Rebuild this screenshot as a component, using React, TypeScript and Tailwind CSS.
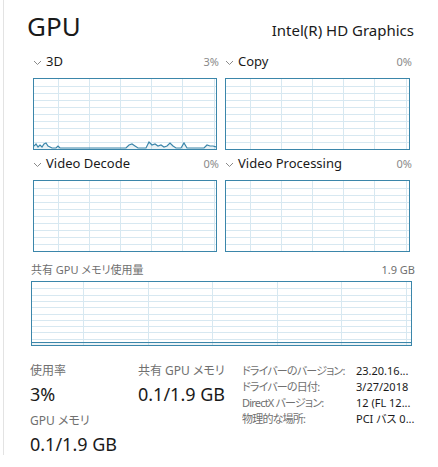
import React from "react";

const LINE = "#3b86aa";
const GRID = "#d7e8f1";

type GraphProps = {
  w: number;
  h: number;
  firstCol: number;
  colStep: number;
  cols: number;
  rows: number;
  points?: [number, number][];
  fillLevel?: number;
};

const Graph: React.FC<GraphProps> = ({ w, h, firstCol, colStep, cols, rows, points, fillLevel }) => {
  const iw = w - 2;
  const ih = h - 2;
  const vlines = Array.from({ length: cols }, (_, i) => Math.round(firstCol + i * colStep) + 0.5);
  const hlines = Array.from({ length: rows - 1 }, (_, i) => Math.round(((i + 1) * ih) / rows) + 0.5);
  const path = points ? points.map(([x, v]) => `${x},${ih - 1 - v}`).join(" ") : "";

  return (
    <div className="border border-[#3b86aa] bg-white" style={{ width: w, height: h }}>
      <svg width={iw} height={ih} className="block">
        {hlines.map((y) => (
          <line key={"h" + y} x1={0} x2={iw} y1={y} y2={y} stroke={GRID} strokeWidth={1} />
        ))}
        {vlines.map((x) => (
          <line key={"v" + x} x1={x} x2={x} y1={0} y2={ih} stroke={GRID} strokeWidth={1} />
        ))}
        {points && (
          <>
            <polygon points={`0,${ih} ${path} ${iw},${ih}`} fill="rgba(59,134,170,0.10)" />
            <polyline points={path} fill="none" stroke={LINE} strokeWidth={1.2} />
          </>
        )}
        {fillLevel !== undefined && (
          <>
            <rect x={0} y={ih - fillLevel} width={iw} height={fillLevel} fill="rgba(59,134,170,0.10)" />
            <line x1={0} x2={iw} y1={ih - fillLevel + 0.5} y2={ih - fillLevel + 0.5} stroke={LINE} strokeWidth={1} />
          </>
        )}
      </svg>
    </div>
  );
};

const Chevron = () => (
  <svg width="9" height="6" viewBox="0 0 9 6" className="mr-[4px] mt-[1px]">
    <polyline points="1,1 4.5,4.5 8,1" fill="none" stroke="#8a8a8a" strokeWidth="1" />
  </svg>
);

const data3d: [number, number][] = [
  [0, 2], [2, 4], [4, 1], [6, 3], [8, 1], [10, 4], [12, 5], [14, 2], [16, 1], [18, 0], [22, 0], [24, 2], [26, 0],
  [92, 0], [95, 3], [98, 4], [101, 2], [104, 0], [112, 0], [115, 6], [118, 3], [121, 4], [124, 2], [127, 3],
  [130, 1], [133, 2], [136, 5], [139, 2], [142, 0], [147, 0], [150, 5], [153, 0], [170, 0], [173, 3], [176, 2],
  [179, 2], [182, 1],
];

const Engine: React.FC<{ name: string; pct: string; w: number; points?: [number, number][] }> = ({ name, pct, w, points }) => (
  <div>
    <div className="flex items-center h-[20px] pb-[2px] mb-[5px]">
      <Chevron />
      <span className="text-[13px] text-[#1a1a1a]">{name}</span>
      <span className="ml-auto text-[11px] text-[#8a8a8a]">{pct}</span>
    </div>
    <Graph w={w} h={72} firstCol={24} colStep={31.1} cols={6} rows={10} points={points} />
  </div>
);

const Stat: React.FC<{ label: string; value: string }> = ({ label, value }) => (
  <div>
    <div className="text-[12px] leading-[16px] text-[#707070] [font-feature-settings:'palt']">{label}</div>
    <div className="mt-[3px] text-[18px] leading-[24px] text-[#1a1a1a]">{value}</div>
  </div>
);

const details: [string, string][] = [
  ["ドライバーのバージョン:", "23.20.16..."],
  ["ドライバーの日付:", "3/27/2018"],
  ["DirectX バージョン:", "12 (FL 12..."],
  ["物理的な場所:", "PCI バス 0..."],
];

export default function App() {
  return (
    <div className="w-[438px] h-[467px] bg-white font-['Noto_Sans','Noto_Sans_CJK_JP',sans-serif]">
      <div className="ml-[3px] h-[455px] border-l border-[#e3e3e3] pt-[13px]">
        {/* header */}
        <div className="flex items-baseline pl-[23px] pr-[24px]">
          <span className="text-[26px] leading-[26px] text-[#1a1a1a]">GPU</span>
          <span className="ml-auto text-[15px] leading-[26px] text-[#1a1a1a]">Intel(R) HD Graphics</span>
        </div>

        {/* engines */}
        <div className="grid grid-cols-[186px_187px] gap-x-[6px] gap-y-[5px] pl-[29px] mt-[10px]">
          <Engine name="3D" pct="3%" w={184} points={data3d} />
          <Engine name="Copy" pct="0%" w={185} />
          <Engine name="Video Decode" pct="0%" w={184} />
          <Engine name="Video Processing" pct="0%" w={185} />
        </div>

        {/* shared memory */}
        <div className="pl-[27px] pr-[23px] mt-[11px]">
          <div className="flex items-center h-[18px] pb-[3px] text-[11px] text-[#707070] [font-feature-settings:'palt']">
            <span>共有 GPU メモリ使用量</span>
            <span className="ml-auto">1.9 GB</span>
          </div>
          <Graph w={381} h={65} firstCol={51} colStep={64.6} cols={6} rows={10} fillLevel={3} />
        </div>

        {/* stats */}
        <div className="flex items-start pl-[26px] mt-[17px]">
          <div className="w-[108px] flex flex-col gap-[7px]">
            <Stat label="使用率" value="3%" />
            <Stat label="GPU メモリ" value="0.1/1.9 GB" />
          </div>
          <div className="w-[104px]">
            <Stat label="共有 GPU メモリ" value="0.1/1.9 GB" />
          </div>
          <div className="grid grid-cols-[114px_1fr] content-start text-[11px] leading-[16px] [font-feature-settings:'palt']">
            {details.map(([k, v]) => (
              <React.Fragment key={k}>
                <span className="text-[#707070] whitespace-nowrap tracking-[-0.8px]">{k}</span>
                <span className="text-[#1a1a1a] whitespace-nowrap">{v}</span>
              </React.Fragment>
            ))}
          </div>
        </div>
      </div>
    </div>
  );
}
